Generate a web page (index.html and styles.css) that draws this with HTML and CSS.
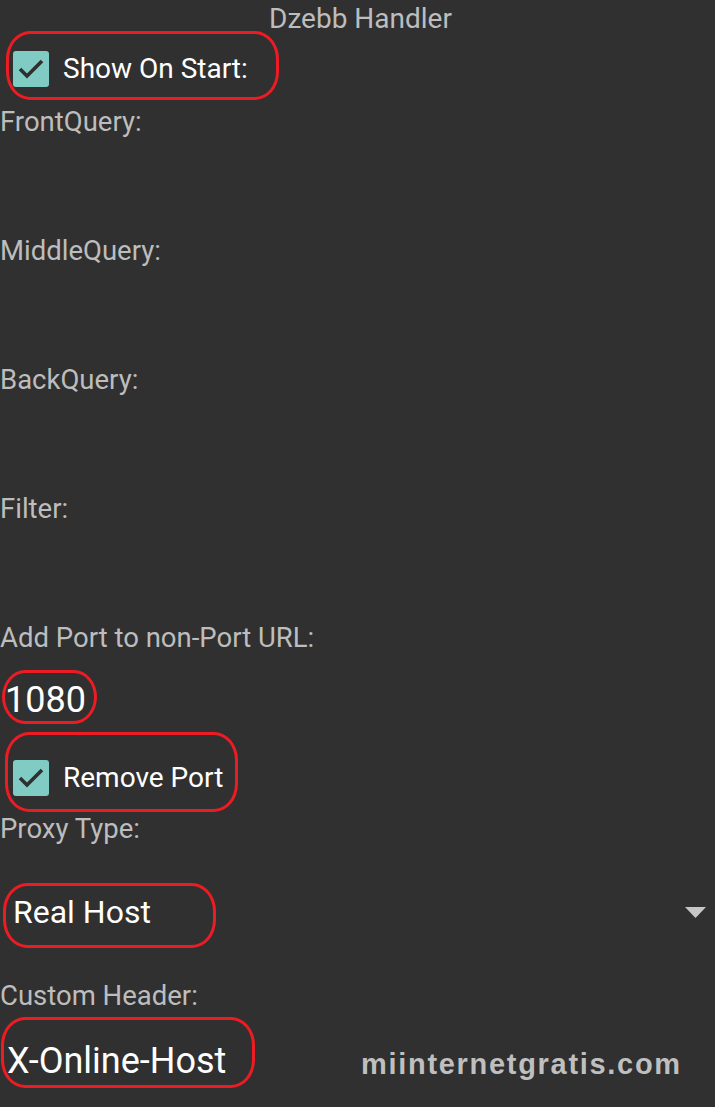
FILE: index.html
```html
<!DOCTYPE html>
<html lang="en">
<head>
    <meta charset="UTF-8">
    <title>Dzebb Handler</title>
    <link rel="stylesheet" href="styles.css">
</head>
<body>
    <div class="panel">
        <h2 class="title">Dzebb Handler</h2>

        <div class="mark mark-start">
            <span class="check">
                <svg width="36" height="36" viewBox="0 0 36 36"><path d="M7 18 L14 25 L29 10" fill="none" stroke="#2f2f2f" stroke-width="3.6"/></svg>
            </span>
            <span class="check-text">Show On Start:</span>
        </div>

        <div class="field">
            <label class="label">FrontQuery:</label>
            <div class="blank"></div>
        </div>
        <div class="field">
            <label class="label">MiddleQuery:</label>
            <div class="blank"></div>
        </div>
        <div class="field">
            <label class="label">BackQuery:</label>
            <div class="blank"></div>
        </div>
        <div class="field">
            <label class="label">Filter:</label>
            <div class="blank"></div>
        </div>

        <label class="label">Add Port to non-Port URL:</label>
        <div class="row">
            <div class="mark mark-port">1080</div>
        </div>

        <div class="row">
            <div class="mark mark-remove">
                <span class="check">
                    <svg width="36" height="36" viewBox="0 0 36 36"><path d="M7 18 L14 25 L29 10" fill="none" stroke="#2f2f2f" stroke-width="3.6"/></svg>
                </span>
                <span class="check-text">Remove Port</span>
            </div>
        </div>

        <label class="label">Proxy Type:</label>
        <div class="spinner">
            <div class="mark mark-type">Real Host</div>
            <svg class="arrow" width="21" height="11" viewBox="0 0 21 11"><polygon points="0,0 21,0 10.5,11" fill="#c6c6c6"/></svg>
        </div>

        <label class="label label-header">Custom Header:</label>
        <div class="row">
            <div class="mark mark-header">X-Online-Host</div>
        </div>
    </div>

    <div class="watermark">miinternetgratis.com</div>
</body>
</html>
```

FILE: styles.css
```css
body {
    margin: 0;
    background-color: #303030;
    font-family: Roboto, "Noto Sans", sans-serif;
    position: relative;
    min-height: 1107px;
}
.panel {
    display: flex;
    flex-direction: column;
    align-items: flex-start;
}
.title {
    align-self: stretch;
    margin: 0;
    padding: 7px 0 0 6px;
    font-size: 28px;
    font-weight: 400;
    line-height: 24px;
    color: #bdbdbd;
    text-align: center;
}
.label {
    display: block;
    font-size: 27.5px;
    line-height: 32px;
    color: #bdbdbd;
}
.blank {
    height: 97px;
}
.row {
    display: flex;
}
.mark {
    display: flex;
    align-items: center;
    box-sizing: border-box;
    border: 3px solid #ed1c24;
    border-radius: 24px / 28px;
    color: #fff;
}
.check {
    display: block;
    width: 36px;
    height: 36px;
    background-color: #80cbc4;
    border-radius: 3px;
}
.check svg {
    display: block;
}
.check-text {
    margin-left: 14px;
    font-size: 28px;
    line-height: 36px;
}
.mark-start {
    height: 69px;
    margin-left: 6px;
    padding: 17px 28px 10px 4px;
    margin-bottom: 6px;
}
.mark-port {
    height: 54px;
    margin: 16px 0 0 2px;
    padding: 6px 8px 0 0;
    align-items: flex-start;
    font-size: 36px;
    line-height: 42px;
}
.mark-remove {
    height: 80px;
    margin: 8px 0 1px 5px;
    padding: 25px 12px 13px 5px;
}
.spinner {
    align-self: stretch;
    display: flex;
    justify-content: space-between;
    align-items: center;
    margin-top: 38px;
    padding-right: 9px;
}
.mark-type {
    height: 65px;
    margin-left: 3px;
    padding: 8px 62px 0 7px;
    align-items: flex-start;
    font-size: 32px;
    line-height: 36px;
}
.arrow {
    margin-top: -6px;
}
.label-header {
    margin-top: 32px;
}
.mark-header {
    height: 71px;
    margin: 5px 0 0 1px;
    padding: 20px 26px 0 3px;
    align-items: flex-start;
    font-size: 36px;
    line-height: 42px;
}
.watermark {
    position: absolute;
    left: 361px;
    top: 1050px;
    font-family: "Liberation Sans", Arial, sans-serif;
    font-weight: bold;
    font-size: 29px;
    line-height: 29px;
    letter-spacing: 1.7px;
    color: #bfbfbf;
}
```
